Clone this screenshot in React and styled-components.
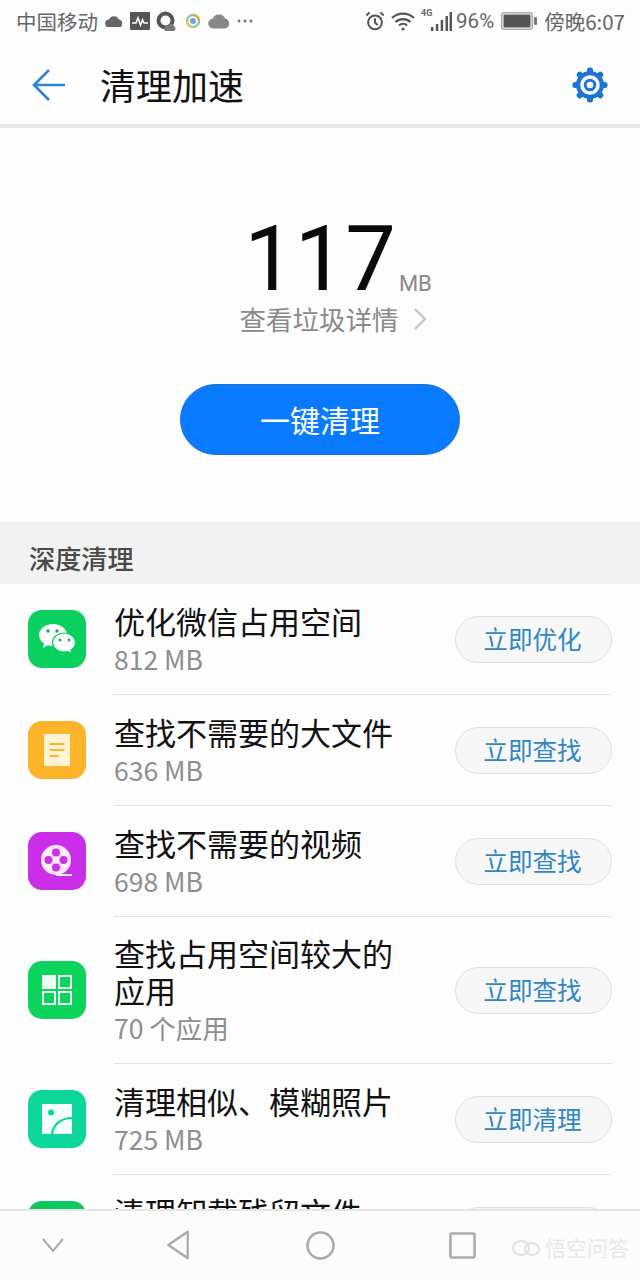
import React from "react";
import styled, { createGlobalStyle } from "styled-components";

const Global = createGlobalStyle`
  html, body { margin: 0; padding: 0; background: #fdfdfd; }
  * { box-sizing: border-box; }
  body { font-family: "Noto Sans CJK SC", Roboto, sans-serif; }
`;
const Page = styled.div`
  width: 640px; height: 1280px; display: flex; flex-direction: column; overflow: hidden; background: #fdfdfd; position: relative;
`;
const StatusBar = styled.div`
  height: 44px; flex: none; display: flex; align-items: center; justify-content: space-between; padding: 0 15px 2px 16px;
  color: #666; font-size: 20.5px; line-height: 40px;
`;
const StatusGroup = styled.div`display: flex; align-items: center; gap: ${p => p.$gap || 6}px;`;
const StatusText = styled.span`
  font-family: ${p => p.$latin ? "Roboto, sans-serif" : "inherit"};
  margin: 0 ${p => p.$mr || 0}px 0 ${p => p.$ml || 0}px;
`;
const StatusIconSlot = styled.span`display: flex; margin: 0 2px 0 -1px;`;
const SignalWrap = styled.div`position: relative; width: 31px; height: 20px; display: flex; justify-content: flex-end;`;
const NetBadge = styled.span`
  position: absolute; left: 0; top: -3px; font-family: Roboto, sans-serif; font-weight: 700; font-size: 9px; line-height: 10px; color: #666;
`;
const Header = styled.header`
  height: 84px; flex: none; display: flex; align-items: center; padding: 2px 32px 0 32px; border-bottom: 4px solid #e9e9e9;
`;
const Title = styled.h1`
  margin: -2px 0 0 34px; font-size: 36px; line-height: 50px; font-weight: 400; color: #111; flex: 1;
`;
const Hero = styled.section`
  height: 394px; flex: none; display: flex; flex-direction: column; align-items: center; padding-top: 98px;
`;
const SizeRow = styled.div`display: flex; align-items: flex-end; height: 68px; margin-left: 36px;`;
const Size = styled.span`
  font-family: Roboto, sans-serif; font-weight: 400; font-size: 90px; line-height: 68px; color: #0a0a0a;
`;
const Unit = styled.span`font-family: Roboto, sans-serif; font-size: 22px; color: #888; line-height: 26px; margin: 0 0 -3px 3px;`;
const Details = styled.div`
  display: flex; align-items: center; gap: 14px; margin-top: 6px; font-size: 26.5px; line-height: 38px; color: #8a8a8a; padding-left: 26px;
`;
const CleanButton = styled.button`
  width: 280px; height: 71px; margin-top: 46px; border-radius: 36px; border: 1px solid #1b6fd0; background: #0a7bff; color: #fff;
  font-family: inherit; font-size: 30px; padding: 0 0 2px;
`;
const SectionHead = styled.div`
  height: 62px; flex: none; background: #f2f2f2; padding: 10px 29px 0; display: flex; align-items: center; font-size: 26.2px; font-weight: 500; color: #4a4a4a;
`;
const List = styled.div`flex: 1; min-height: 0; overflow: hidden;`;
const Row = styled.div`display: flex; align-items: stretch; padding-left: 28px;`;
const IconBox = styled.div`
  width: 58px; height: 58px; flex: none; border-radius: 14px; background: ${p => p.$bg}; align-self: center; margin-top: -2px; display: flex; align-items: center; justify-content: center;
`;
const RowBody = styled.div`
  flex: 1; margin: 0 28px; min-height: 111px; display: flex; align-items: center; justify-content: space-between;
  padding: 17px 0 16px; border-bottom: 1px solid #e4e4e4;
`;
const RowText = styled.div`width: 290px;`;
const RowTitle = styled.div`font-size: 31px; line-height: 37px; color: #111; white-space: nowrap;`;
const RowSub = styled.div`font-size: 26.5px; line-height: 38px; color: #8e8e8e; margin-top: 1px;`;
const ActionButton = styled.button`
  width: 157px; height: 47px; flex: none; border-radius: 24px; border: 1px solid #e0e0e0; background: #f7f7f7; color: #2f86c4;
  font-family: inherit; font-size: 24.6px; padding: 0 2px 3px 0; margin-top: -1px;
`;
const NavBar = styled.nav`
  height: 71px; flex: none; background: #fcfcfc; border-top: 2px solid #e6e6e6; position: relative;
`;
const NavSlot = styled.div`position: absolute; left: ${p => p.$x}px; top: 14px; width: 40px; height: 40px; display: flex; align-items: center; justify-content: center;`;
const Watermark = styled.div`
  position: absolute; right: 11px; top: 23px; display: flex; align-items: center; gap: 5px; color: rgba(226,226,226,.8); font-size: 21px; line-height: 26px;
`;

const Cloud = ({ w = 20, fill = "#666" }) => (
  <svg width={w} height={w * 0.7} viewBox="0 0 20 14"><path fill={fill} d="M5 14a4.5 4.5 0 0 1-.6-9A6 6 0 0 1 15.5 5 4.6 4.6 0 0 1 15.6 14Z" /></svg>
);
const Pulse = () => (
  <svg width="20" height="18" viewBox="0 0 20 18"><rect width="20" height="18" rx="1" fill="#555" /><path d="M2 11h4l2-5 2.5 7 2-5 1.5 3h4" stroke="#fff" strokeWidth="1.6" fill="none" /></svg>
);
const QIcon = () => (
  <svg width="20" height="20" viewBox="0 0 20 20"><circle cx="9.5" cy="9.500" r="7" fill="none" stroke="#555" strokeWidth="4" /><path d="M9 20a4 4 0 0 1 3-6 3.500 3.500 0 0 1 6 1 2.800 2.800 0 0 1 0 5Z" fill="#777" /></svg>
);
const Pin = () => (
  <svg width="16" height="16" viewBox="0 0 16 16"><circle cx="8" cy="8" r="6" fill="none" stroke="#8dc8a0" strokeWidth="2.4" /><path d="M8 2a6 6 0 0 1 6 6" fill="none" stroke="#e3a34a" strokeWidth="2.4" /><path d="M2 8a6 6 0 0 0 6 6" fill="none" stroke="#e8c95a" strokeWidth="2.4" /><circle cx="8" cy="8" r="3" fill="#6aa3d8" /></svg>
);
const Dots = () => (
  <svg width="16" height="4" viewBox="0 0 16 4"><g fill="#777"><circle cx="2" cy="2" r="1.5" /><circle cx="8" cy="2" r="1.5" /><circle cx="14" cy="2" r="1.5" /></g></svg>
);
const Alarm = () => (
  <svg width="20" height="20" viewBox="0 0 22 22" fill="none" stroke="#555" strokeWidth="2.2"><circle cx="11" cy="12.5" r="7.6" /><path d="M11 8v5l3 2.5M1.5 5 5 1.5M20.5 5 17 1.5" /></svg>
);
const Wifi = () => (
  <svg width="24" height="19" viewBox="0 0 24 19" fill="none" stroke="#555" strokeWidth="2.2"><path d="M1 6a16 16 0 0 1 22 0M4.5 10a11 11 0 0 1 15 0M8 13.5a6 6 0 0 1 8 0" /><circle cx="12" cy="17" r="1.6" fill="#555" stroke="none" /></svg>
);
const Signal = () => (
  <svg width="21" height="20" viewBox="0 0 26 20" preserveAspectRatio="none" fill="#555"><rect x="0" y="16" width="3" height="4" /><rect x="6" y="13" width="3" height="7" /><rect x="12" y="9" width="3" height="11" /><rect x="18" y="5" width="3" height="15" /><rect x="23" y="1" width="3" height="19" /></svg>
);
const Battery = () => (
  <svg width="36" height="18" viewBox="0 0 36 18"><rect x=".75" y=".75" width="30.5" height="16.5" rx="2.5" fill="none" stroke="#aaa" strokeWidth="1.5" /><rect x="2.5" y="2.5" width="27" height="13" rx="1" fill="#555" /><rect x="33" y="5" width="3" height="8" rx="1" fill="#777" /></svg>
);
const Back = () => (
  <svg width="34" height="34" viewBox="0 0 34 34" fill="none" stroke="#2b84d6" strokeWidth="2.6"><path d="M33 17H2M17 2 2 17l15 15" /></svg>
);
const Gear = () => (
  <svg width="36" height="36" viewBox="0 0 36 36">
    <g fill="#1a76d2">{[0, 45, 90, 135, 180, 225, 270, 315].map(a => <rect key={a} x="15" y="0.5" width="6" height="7" rx="2.5" transform={`rotate(${a} 18 18)`} />)}</g>
    <circle cx="18" cy="18" r="11.9" fill="none" stroke="#1a76d2" strokeWidth="4.2" />
    <circle cx="18" cy="18" r="4.8" fill="none" stroke="#1a76d2" strokeWidth="3" />
  </svg>
);
const Chevron = () => (
  <svg width="14" height="24" viewBox="0 0 14 24" fill="none" stroke="#c4c4c4" strokeWidth="2.4"><path d="m2 2 10 10L2 22" /></svg>
);
const Wechat = () => (
  <svg width="38" height="32" viewBox="0 0 38 32">
    <path fill="#fff" d="M15 1C7 1 1 6 1 12c0 3.600 2 6.500 5 8.600L5 25l5-2.700c1.500.4 3.200.7 5 .7 8 0 14-5 14-11S23 1 15 1Z" />
    <path fill="#fff" stroke="#0ad05f" strokeWidth="1.2" d="M26 10c-6.400 0-11.500 4.300-11.500 9.500S19.600 29 26 29c1.300 0 2.500-.2 3.700-.5l4.100 2.300-.9-3.700c2.700-1.700 4.500-4.400 4.500-7.600C37.500 14.300 32.400 10 26 10Z" />
    <g fill="#0fae58"><circle cx="10" cy="8" r="1.7" /><circle cx="19" cy="8" r="1.7" /><circle cx="22" cy="17" r="1.400" /><circle cx="31" cy="17" r="1.400" /></g>
  </svg>
);
const Doc = () => (
  <svg width="26" height="32" viewBox="0 0 26 32"><rect width="26" height="32" fill="#fff3d6" /><path d="M5.500 10h15M5.500 16h15M5.500 22h9" stroke="#fbb62a" strokeWidth="2" /></svg>
);
const Reel = () => (
  <svg width="32" height="32" viewBox="0 0 32 32">
    <circle cx="15" cy="15" r="15" fill="#fbeafd" />
    <path d="M15 30h16" stroke="#fbeafd" strokeWidth="2" />
    <g fill="#cb2fe6"><circle cx="15" cy="7.500" r="4" /><circle cx="15" cy="22.500" r="4" /><circle cx="7.500" cy="15" r="4" /><circle cx="22.500" cy="15" r="4" /></g>
  </svg>
);
const Grid = () => (
  <svg width="30" height="30" viewBox="0 0 30 30" fill="none" stroke="#eafff0" strokeWidth="2">
    <rect x="1" y="1" width="12" height="12" fill="#eafff0" /><rect x="17" y="1" width="12" height="12" /><rect x="1" y="17" width="12" height="12" /><rect x="17" y="17" width="12" height="12" />
  </svg>
);
const Photo = () => (
  <svg width="30" height="30" viewBox="0 0 30 30">
    <rect width="30" height="30" fill="#f2fffa" />
    <circle cx="9" cy="8.500" r="3" fill="#0cd69a" />
    <path d="M10 30C11 21 19 14 30 14" fill="none" stroke="#0cd69a" strokeWidth="2.200" />
  </svg>
);

const rows = [
  { bg: "#0ad05f", icon: <Wechat />, title: ["优化微信占用空间"], sub: "812 MB", action: "立即优化" },
  { bg: "#fcb42a", icon: <Doc />, title: ["查找不需要的大文件"], sub: "636 MB", action: "立即查找" },
  { bg: "#ca2ee8", icon: <Reel />, title: ["查找不需要的视频"], sub: "698 MB", action: "立即查找" },
  { bg: "#0cd35c", icon: <Grid />, title: ["查找占用空间较大的", "应用"], sub: "70 个应用", action: "立即查找" },
  { bg: "#0cd69a", icon: <Photo />, title: ["清理相似、模糊照片"], sub: "725 MB", action: "立即清理" },
  { bg: "#0cc860", icon: null, title: ["清理卸载残留文件"], sub: "120 MB", action: "立即清理" },
];

export default function App() {
  return (
    <Page>
      <Global />
      <StatusBar>
        <StatusGroup $gap={7}>
          <StatusText>中国移动</StatusText>
          <Cloud w={18} />
          <Pulse />
          <StatusIconSlot><QIcon /></StatusIconSlot>
          <Pin />
          <Cloud w={22} fill="#888" />
          <Dots />
        </StatusGroup>
        <StatusGroup $gap={6}>
          <Alarm />
          <Wifi />
          <SignalWrap><NetBadge>4G</NetBadge><Signal /></SignalWrap>
          <StatusText $latin $ml={-2} $mr={1}>96%</StatusText>
          <Battery />
          <StatusText $ml={1}>傍晚6:07</StatusText>
        </StatusGroup>
      </StatusBar>
      <Header>
        <Back />
        <Title>清理加速</Title>
        <Gear />
      </Header>
      <Hero>
        <SizeRow>
          <Size>117</Size>
          <Unit>MB</Unit>
        </SizeRow>
        <Details>查看垃圾详情<Chevron /></Details>
        <CleanButton>一键清理</CleanButton>
      </Hero>
      <SectionHead>深度清理</SectionHead>
      <List>
        {rows.map((r, i) => (
          <Row key={i}>
            <IconBox $bg={r.bg}>{r.icon}</IconBox>
            <RowBody>
              <RowText>
                {r.title.map(t => <RowTitle key={t}>{t}</RowTitle>)}
                <RowSub>{r.sub}</RowSub>
              </RowText>
              <ActionButton>{r.action}</ActionButton>
            </RowBody>
          </Row>
        ))}
      </List>
      <NavBar>
        <NavSlot $x={33}><svg width="24" height="16" viewBox="0 0 24 16" fill="none" stroke="#aaa" strokeWidth="2"><path d="m2 2 10 12L22 2" /></svg></NavSlot>
        <NavSlot $x={158}><svg width="26" height="30" viewBox="0 0 26 34" fill="none" stroke="#aaa" strokeWidth="2.600" strokeLinejoin="round"><path d="M24 2v30L2 17Z" /></svg></NavSlot>
        <NavSlot $x={300}><svg width="29" height="29" viewBox="0 0 30 30" fill="none" stroke="#aaa" strokeWidth="2.600"><ellipse cx="15" cy="15" rx="13.500" ry="13.500" /></svg></NavSlot>
        <NavSlot $x={442}><svg width="27" height="27" viewBox="0 0 28 28" fill="none" stroke="#aaa" strokeWidth="2.600"><rect x="1.500" y="1.500" width="25" height="25" rx="1.500" /></svg></NavSlot>
        <Watermark>
          <svg width="28" height="20" viewBox="0 0 28 20" fill="none" stroke="#e2e2e2" strokeWidth="2"><ellipse cx="9" cy="11" rx="8" ry="7" /><ellipse cx="20" cy="12" rx="7" ry="6" /></svg>
          <span>悟空问答</span>
        </Watermark>
      </NavBar>
    </Page>
  );
}
